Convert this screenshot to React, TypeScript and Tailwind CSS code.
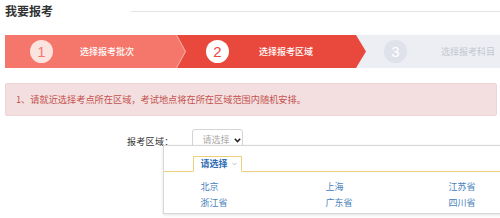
import React from "react";

const font = { fontFamily: '"Noto Sans CJK SC", "Noto Sans", sans-serif' };

function Step({
  n,
  label,
  bg,
  circleBg,
  circleText,
  labelClass,
  className,
  clip,
  padLeft,
  gap,
}: {
  n: number;
  label: string;
  bg: string;
  circleBg: string;
  circleText: string;
  labelClass: string;
  className: string;
  clip: string;
  padLeft: string;
  gap: string;
}) {
  return (
    <div className={`h-[33px] flex items-center ${bg} ${className} ${clip} ${padLeft} ${gap}`}>
      <div
        className={`w-[23px] h-[23px] rounded-full flex items-center justify-center text-[15px] leading-none ${circleBg} ${circleText}`}
        style={{ fontFamily: '"Liberation Sans", sans-serif' }}
      >
        {n}
      </div>
      <span className={`text-[9px] ${labelClass}`}>{label}</span>
    </div>
  );
}

export default function App() {
  const cities = ["北京", "上海", "江苏省", "浙江省", "广东省", "四川省"];
  return (
    <div className="w-[500px] h-[218px] bg-white overflow-hidden relative" style={font}>
      {/* title */}
      <div className="flex items-center pl-[5px] pt-[1px] h-[20px]">
        <span className="text-[12px] font-bold text-[#333] leading-none">我要报考</span>
        <div className="flex-1 ml-[78px] h-px bg-[#e3e3e3] mt-[1px]" />
      </div>

      {/* steps */}
      <div className="flex mt-[15px] pl-[5px]">
        <div className="relative z-20 w-[181px] h-[33px] bg-[#fbb3aa] [clip-path:polygon(0_0,calc(100%-9px)_0,100%_50%,calc(100%-9px)_100%,0_100%)]">
          <Step
            n={1}
            label="选择报考批次"
            bg="bg-[#f5776b]"
            circleBg="bg-[#fbe3e0]"
            circleText="text-[#f07a6e]"
            labelClass="text-white font-medium"
            className="w-[180px]"
            clip="[clip-path:polygon(0_0,calc(100%-9px)_0,100%_50%,calc(100%-9px)_100%,0_100%)]"
            padLeft="pl-[25px]"
            gap="gap-[27px]"
          />
        </div>
        <div className="relative z-10 -ml-[9px]">
          <Step
            n={2}
            label="选择报考区域"
            bg="bg-[#e9493d]"
            circleBg="bg-white"
            circleText="text-[#e9493d]"
            labelClass="text-white font-medium"
            className="w-[189px]"
            clip="[clip-path:polygon(0_0,calc(100%-10px)_0,100%_50%,calc(100%-10px)_100%,0_100%)]"
            padLeft="pl-[29px]"
            gap="gap-[30px]"
          />
        </div>
        <div className="flex-1 -ml-[10px]">
          <Step
            n={3}
            label="选择报考科目"
            bg="bg-[#eceef3]"
            circleBg="bg-[#dfe2ea]"
            circleText="text-white"
            labelClass="text-[#c3c7cf]"
            className="w-full"
            clip=""
            padLeft="pl-[28px]"
            gap="gap-[34px]"
          />
        </div>
      </div>

      {/* alert */}
      <div className="mt-[15px] ml-[5px] mr-[3px] h-[33px] bg-[#f3dfe0] border border-[#efd3d5] rounded-[2px] flex items-center pl-[10px]">
        <span className="text-[9.2px] text-[#c4534e]">1、请就近选择考点所在区域，考试地点将在所在区域范围内随机安排。</span>
      </div>

      {/* form row */}
      <div className="flex items-start mt-[13px] pl-[127px]">
        <span className="text-[9px] text-[#333] mt-[6px] tracking-[0.3px]">报考区域：</span>
        <div className="relative ml-[18px]">
          <div className="w-[51px] h-[22px] border border-[#d4d4d4] rounded-[3px] flex items-center pl-[10px] gap-[4px]">
            <span className="text-[9px] text-[#aaa]">请选择</span>
            <svg width="7" height="5" viewBox="0 0 7 5">
              <path d="M0.8 0.8 L3.5 3.6 L6.2 0.8" fill="none" stroke="#222" strokeWidth="1.5" />
            </svg>
          </div>
          {/* dropdown panel */}
          <div className="absolute left-[-29px] top-[16px] w-[345px] h-[69px] bg-white border border-[#d8d8d8] shadow-[0_1px_3px_rgba(0,0,0,0.12)] z-30">
            <div className="relative mt-[10px] h-[16px] border-b border-[#ead07a]">
              <div className="absolute left-[29px] top-0 w-[49px] h-[16px] border border-[#ead07a] border-b-white bg-white flex items-center pl-[7px] gap-[4px]">
                <span className="text-[9px] font-bold text-[#2d6cb5]">请选择</span>
                <svg width="5" height="4" viewBox="0 0 5 4">
                  <path d="M0.5 0.8 L2.5 3 L4.5 0.8" fill="none" stroke="#bbb" strokeWidth="0.9" />
                </svg>
              </div>
            </div>
            <div className="grid grid-cols-[125px_123px_60px] pl-[37px] mt-[9px] gap-y-[4px]">
              {cities.map((c) => (
                <span key={c} className="text-[9px] text-[#4a82bd] leading-[12px]">
                  {c}
                </span>
              ))}
            </div>
          </div>
        </div>
      </div>
    </div>
  );
}
